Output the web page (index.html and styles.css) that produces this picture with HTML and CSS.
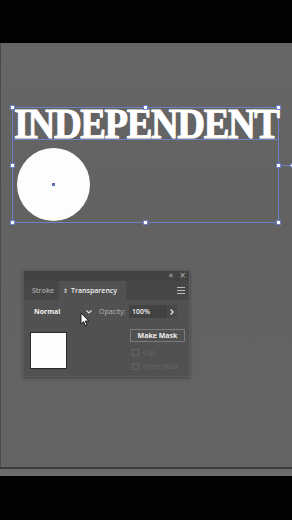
FILE: index.html
```html
<!DOCTYPE html>
<html>
<head>
<meta charset="utf-8">
<link rel="stylesheet" href="styles.css">
</head>
<body>
<div class="screen">
  <div class="band-top"></div>
  <div class="canvas">
    <div class="selection">
      <div class="headline"><span class="headline-text">INDEPENDENT</span></div>
      <div class="circle"><span class="center-pt"></span></div>
      <span class="handle h-tl"></span>
      <span class="handle h-tm"></span>
      <span class="handle h-tr"></span>
      <span class="handle h-ml"></span>
      <span class="handle h-mr"></span>
      <span class="handle h-bl"></span>
      <span class="handle h-bm"></span>
      <span class="handle h-br"></span>
      <span class="port-line"></span>
      <span class="port-dot"></span>
    </div>

    <div class="panel">
      <div class="panel-head">
        <span class="head-icon">&#171;</span>
        <span class="head-icon close">&#215;</span>
      </div>
      <div class="tabs">
        <div class="tab">Stroke</div>
        <div class="tab active"><span class="updown">&#8661;</span>Transparency</div>
        <div class="tab-spacer"></div>
        <div class="menu-btn"><span></span><span></span><span></span></div>
      </div>
      <div class="panel-body">
        <div class="row-top">
          <div class="blend">
            <span class="blend-label">Normal</span>
            <svg class="chev" width="6" height="4" viewBox="0 0 6 4"><path d="M0.5 0.5 L3 3 L5.5 0.5" fill="none" stroke="#d8d8d8" stroke-width="1.2"/></svg>
          </div>
          <span class="op-label">Opacity:</span>
          <div class="op-input">100%</div>
          <div class="op-btn">
            <svg width="4" height="6" viewBox="0 0 4 6"><path d="M0.6 0.5 L3.2 3 L0.6 5.5" fill="none" stroke="#e6e6e6" stroke-width="1.2"/></svg>
          </div>
        </div>
        <div class="row-bottom">
          <div class="thumb"></div>
          <div class="mask-col">
            <div class="mask-btn">Make Mask</div>
            <div class="check-row"><span class="check"></span><span class="check-label">Clip</span></div>
            <div class="check-row"><span class="check"></span><span class="check-label">Invert Mask</span></div>
          </div>
        </div>
      </div>
      <svg class="cursor" width="10" height="15" viewBox="0 0 10 15">
        <path d="M1 1 L1 12 L3.6 9.6 L5.6 14 L7.2 13.3 L5.3 9 L8.8 9 Z" fill="#ffffff" stroke="#111111" stroke-width="0.9" stroke-linejoin="round"/>
      </svg>
    </div>
  </div>
  <div class="dock-line"></div>
  <div class="dock"></div>
  <div class="band-bottom"></div>
</div>
</body>
</html>
```

FILE: styles.css
```css
* { box-sizing: border-box; }
html, body { margin: 0; padding: 0; background: #000; }
body { width: 292px; height: 520px; overflow: hidden; font-family: "Open Sans", "Liberation Sans", sans-serif; }

.screen { display: flex; flex-direction: column; width: 292px; height: 520px; }
.band-top { height: 43px; background: #020202; flex: none; }
.canvas {
  position: relative;
  height: 424px;
  flex: none;
  background: linear-gradient(to bottom, #666666, #626262 40%, #646464);
  border-left: 1px solid #4a4a4a;
}
.dock-line { height: 2px; background: #3b3b3b; flex: none; }
.dock { height: 7px; background: #6c6c6c; flex: none; }
.band-bottom { flex: 1; background: #030303; }

/* selection group */
.selection {
  position: absolute;
  left: 11px;
  top: 64px;
  width: 267px;
  height: 116px;
  border: 1px solid #6d7fc6;
  padding-top: 3px;
}
.headline {
  height: 29px;
  border-bottom: 1px solid #6d7fc6;
  white-space: nowrap;
  overflow: visible;
}
.headline-text {
  display: inline-block;
  font-family: "Liberation Serif", "DejaVu Serif", serif;
  font-weight: 700;
  font-size: 42px;
  line-height: 27px;
  color: #ffffff;
  letter-spacing: -1.5px;
  -webkit-text-stroke: 1.1px #ffffff;
  transform: scaleX(0.915);
  transform-origin: left center;
  margin-left: 1px;
}
.circle {
  position: relative;
  width: 73px;
  height: 73px;
  margin-top: 8px;
  margin-left: 4px;
  border-radius: 50%;
  background: #fdfdfd;
}
.center-pt {
  position: absolute;
  left: 35px;
  top: 35px;
  width: 3px;
  height: 3px;
  background: #5a6bb8;
}
.handle {
  position: absolute;
  width: 5px;
  height: 5px;
  background: #ffffff;
  border: 1px solid #6d7fc6;
}
.h-tl { left: -3px; top: -3px; }
.h-tm { left: 130px; top: -3px; }
.h-tr { right: -3px; top: -3px; }
.h-ml { left: -3px; top: 55px; }
.h-mr { right: -3px; top: 55px; }
.h-bl { left: -3px; bottom: -3px; }
.h-bm { left: 130px; bottom: -3px; }
.h-br { right: -3px; bottom: -3px; }
.port-line {
  position: absolute;
  left: 268px;
  top: 57px;
  width: 11px;
  height: 1px;
  background: #6d7fc6;
}
.port-dot {
  position: absolute;
  left: 277px;
  top: 55px;
  width: 5px;
  height: 5px;
  border-radius: 50%;
  background: #ffffff;
  border: 1px solid #6d7fc6;
}

/* panel */
.panel {
  position: absolute;
  left: 22px;
  top: 227px;
  width: 167px;
  height: 107px;
  background: #515151;
  border: 1px solid #5c5c5c;
  box-shadow: 0 1px 3px rgba(0,0,0,0.35);
  display: flex;
  flex-direction: column;
}
.panel-head {
  height: 10px;
  background: #434343;
  display: flex;
  justify-content: flex-end;
  align-items: center;
  gap: 6px;
  padding-right: 3px;
  flex: none;
}
.head-icon {
  font-size: 8px;
  line-height: 8px;
  color: #bdbdbd;
  font-family: "DejaVu Sans", sans-serif;
}
.head-icon.close { font-size: 8px; }
.tabs {
  height: 19px;
  display: flex;
  background: #474747;
  flex: none;
}
.tab {
  display: flex;
  align-items: center;
  font-size: 7px;
  font-weight: 600;
  color: #a9a9a9;
  padding: 0 6px 0 8px;
  width: 35px;
}
.tab.active {
  background: #515151;
  color: #efefef;
  width: 67px;
  padding-left: 4px;
}
.updown {
  font-family: "DejaVu Sans", sans-serif;
  font-size: 6px;
  margin-right: 3px;
  color: #cfcfcf;
}
.tab-spacer { flex: 1; }
.menu-btn {
  display: flex;
  flex-direction: column;
  justify-content: center;
  gap: 2px;
  padding-right: 3px;
  width: 12px;
}
.menu-btn span { display: block; height: 1px; background: #b9b9b9; width: 8px; }

.panel-body {
  flex: 1;
  padding: 5px 6px 0 6px;
}
.row-top {
  display: flex;
  align-items: center;
  height: 13px;
}
.blend {
  display: flex;
  align-items: center;
  justify-content: space-between;
  width: 64px;
  padding-left: 4px;
  padding-right: 2px;
  height: 13px;
}
.blend-label { font-size: 7px; font-weight: 700; color: #f2f2f2; }
.chev { display: block; }
.op-label {
  font-size: 7px;
  color: #b8b8b8;
  margin-left: 5px;
  width: 30px;
}
.op-input {
  width: 36px;
  height: 13px;
  background: #424242;
  font-size: 7px;
  font-weight: 600;
  color: #f0f0f0;
  display: flex;
  align-items: center;
  padding-left: 3px;
}
.op-btn {
  width: 12px;
  height: 13px;
  background: #484848;
  display: flex;
  align-items: center;
  justify-content: center;
  border-left: 1px solid #3c3c3c;
}
.op-btn svg { display: block; }

.row-bottom {
  display: flex;
  margin-top: 11px;
}
.thumb {
  width: 37px;
  height: 37px;
  margin-top: 3px;
  background: #fefefe;
  border: 1px solid #2a2a2a;
  flex: none;
}
.mask-col {
  margin-left: 63px;
  display: flex;
  flex-direction: column;
}
.mask-btn {
  width: 55px;
  height: 13px;
  border: 1px solid #7a7a7a;
  font-size: 7px;
  font-weight: 700;
  color: #f0f0f0;
  display: flex;
  align-items: center;
  justify-content: center;
}
.check-row {
  display: flex;
  align-items: center;
  height: 7px;
  margin-top: 7px;
  padding-left: 2px;
}
.check-row + .check-row { margin-top: 7px; }
.check {
  width: 7px;
  height: 7px;
  border: 1px solid #666666;
  flex: none;
}
.check-label {
  font-size: 6.5px;
  color: #676767;
  margin-left: 4px;
}
.cursor {
  position: absolute;
  left: 56px;
  top: 41px;
}
```
